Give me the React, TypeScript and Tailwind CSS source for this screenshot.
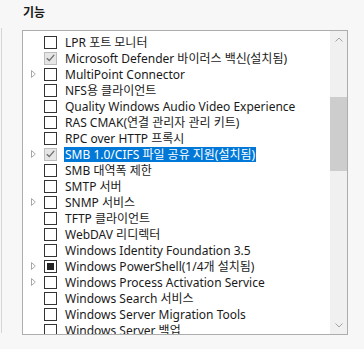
import React from "react";

type Row = {
  label: string;
  state: "off" | "on" | "partial";
  expand?: boolean;
  selected?: boolean;
};

const rows: Row[] = [
  { label: "LPR 포트 모니터", state: "off" },
  { label: "Microsoft Defender 바이러스 백신(설치됨)", state: "on" },
  { label: "MultiPoint Connector", state: "off", expand: true },
  { label: "NFS용 클라이언트", state: "off" },
  { label: "Quality Windows Audio Video Experience", state: "off" },
  { label: "RAS CMAK(연결 관리자 관리 키트)", state: "off" },
  { label: "RPC over HTTP 프록시", state: "off" },
  { label: "SMB 1.0/CIFS 파일 공유 지원(설치됨)", state: "on", expand: true, selected: true },
  { label: "SMB 대역폭 제한", state: "off" },
  { label: "SMTP 서버", state: "off" },
  { label: "SNMP 서비스", state: "off", expand: true },
  { label: "TFTP 클라이언트", state: "off" },
  { label: "WebDAV 리디렉터", state: "off" },
  { label: "Windows Identity Foundation 3.5", state: "off" },
  { label: "Windows PowerShell(1/4개 설치됨)", state: "partial", expand: true },
  { label: "Windows Process Activation Service", state: "off", expand: true },
  { label: "Windows Search 서비스", state: "off" },
  { label: "Windows Server Migration Tools", state: "off" },
  { label: "Windows Server 백업", state: "off" },
];

function Box({ state }: { state: Row["state"] }) {
  if (state === "on") {
    return (
      <div className="w-[13px] h-[13px] shrink-0 border border-[#bcbcbc] bg-[#e6e6e6] flex items-center justify-center">
        <svg width="9" height="8" viewBox="0 0 9 8">
          <path d="M0.8 4.2 L3.3 6.6 L8.2 0.9" fill="none" stroke="#707070" strokeWidth="1.4" />
        </svg>
      </div>
    );
  }
  return (
    <div className="w-[13px] h-[13px] shrink-0 border border-[#333333] bg-white flex items-center justify-center">
      {state === "partial" && <div className="w-[7px] h-[7px] bg-[#222222]" />}
    </div>
  );
}

export default function App() {
  return (
    <div
      className="w-[364px] h-[349px] bg-[#f7f7f7] flex overflow-hidden text-[#1a1a1a]"
      style={{ fontFamily: '"Noto Sans", "Noto Sans CJK KR", sans-serif' }}
    >
      <div className="w-px ml-px mt-[28px] h-[305px] bg-[#d6d6d6]" />
      <div className="flex flex-col ml-[20px]">
        <div className="h-[30px] pt-[4px] pl-px text-[12px] font-semibold">기능</div>
        <div className="w-[326px] h-[305px] border border-[#adadad] bg-white flex">
          <div className="flex-1 overflow-hidden pt-[3px]">
            {rows.map((r) => (
              <div key={r.label} className="h-4 flex items-center pl-[8px] whitespace-nowrap">
                <div className="w-[13px] shrink-0 flex items-center">
                  {r.expand && (
                    <svg width="5" height="8" viewBox="0 0 5 8">
                      <path d="M0.5 0.5 L4.3 4 L0.5 7.5 Z" fill="none" stroke="#a6a6a6" strokeWidth="1" />
                    </svg>
                  )}
                </div>
                <Box state={r.state} />
                <span
                  className={
                    "ml-[7px] px-px text-[12px] leading-[15px] " +
                    (r.selected ? "bg-[#0078d7] text-white" : "")
                  }
                >
                  {r.label}
                </span>
              </div>
            ))}
          </div>
          <div className="w-[17px] bg-[#f0f0f0] flex flex-col items-center">
            <div className="h-[17px] w-full flex items-center justify-center">
              <svg width="8" height="5" viewBox="0 0 8 5">
                <path d="M0.5 4.5 L4 1 L7.5 4.5" fill="none" stroke="#a3a3a3" strokeWidth="1" />
              </svg>
            </div>
            <div className="mt-[49px] h-[74px] w-full bg-[#cdcdcd]" />
            <div className="flex-1" />
            <div className="h-[17px] w-full flex items-center justify-center">
              <svg width="8" height="5" viewBox="0 0 8 5">
                <path d="M0.5 0.5 L4 4 L7.5 0.5" fill="none" stroke="#a3a3a3" strokeWidth="1" />
              </svg>
            </div>
          </div>
        </div>
      </div>
    </div>
  );
}
